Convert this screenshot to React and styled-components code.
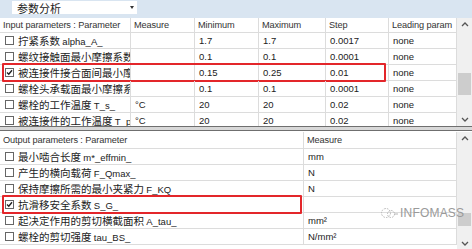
import React from "react";
import styled, { createGlobalStyle } from "styled-components";

const Global = createGlobalStyle`
  html, body { margin: 0; padding: 0; background: #ffffff; }
  body { font-family: "Liberation Sans", "Noto Sans CJK SC", sans-serif; font-size: 10px; color: #222; }
  * { box-sizing: border-box; }
`;

const Screen = styled.div`
  width: 472px;
  height: 249px;
  overflow: hidden;
  position: relative;
  display: flex;
  flex-direction: column;
  background: #fff;
`;

const TopBar = styled.div`
  height: 18px;
  background: #d9e5f1;
  padding: 1px 0 0 12px;
  flex: none;
`;

const Dropdown = styled.div`
  width: 125px;
  height: 13px;
  background: #fff;
  display: flex;
  align-items: center;
  justify-content: space-between;
  padding: 0 3px 0 5px;
  font-family: "Noto Sans CJK SC", sans-serif;
  font-size: 11px;
  color: #222;
`;

const Caret = styled.span`
  width: 0;
  height: 0;
  border-left: 2.5px solid transparent;
  border-right: 2.5px solid transparent;
  border-top: 3px solid #333;
`;

const Panel = styled.div`
  height: ${(p) => p.$h}px;
  display: flex;
  flex: none;
  overflow: hidden;
`;

const Table = styled.div`
  width: 457px;
  display: flex;
  flex-direction: column;
`;

const Row = styled.div`
  display: grid;
  grid-template-columns: ${(p) => p.$cols};
  height: ${(p) => p.$h}px;
  flex: none;
  position: relative;
  border-bottom: 1px solid #dcdcdc;
`;

const Cell = styled.div`
  border-right: 1px solid #dcdcdc;
  display: flex;
  align-items: center;
  gap: 4px;
  padding-left: ${(p) => (p.$head ? 3 : p.$first ? 5 : 4)}px;
  white-space: nowrap;
  overflow: hidden;
  font-family: ${(p) =>
    p.$cjk ? '"Noto Sans CJK SC", sans-serif' : '"Liberation Sans", "Noto Sans CJK SC", sans-serif'};
  font-size: ${(p) => (p.$cjk ? 10.5 : p.$head ? 9.2 : 9.5)}px;
  letter-spacing: ${(p) => (p.$head ? "-0.1px" : "0")};
  color: ${(p) => (p.$head ? "#333" : "#222")};
`;

const Latin = styled.span`
  font-family: "Liberation Sans", sans-serif;
  font-size: 9.5px;
`;

const Box = styled.span`
  width: 9px;
  height: 9px;
  border: 1px solid #666;
  background: #fff;
  flex: none;
  display: flex;
  align-items: center;
  justify-content: center;
`;

const Highlight = styled.div`
  position: absolute;
  left: 2px;
  top: -2px;
  width: ${(p) => p.$w}px;
  height: 19px;
  border: 2px solid #e3262a;
  border-radius: 1px;
  pointer-events: none;
`;

const Scroll = styled.div`
  width: 15px;
  background: #f0f0f0;
  display: flex;
  flex-direction: column;
  align-items: center;
  justify-content: space-between;
  position: relative;
  padding: 3px 0;
  flex: none;
`;

const Thumb = styled.div`
  position: absolute;
  left: 1px;
  width: 13px;
  top: ${(p) => p.$top}px;
  height: ${(p) => p.$h}px;
  background: #cdcdcd;
`;

const Splitter = styled.div`
  height: 5px;
  flex: none;
  border-top: 1px solid #6f6f6f;
  border-bottom: 1px solid #6f6f6f;
  background: #d8d8d8;
  margin-bottom: 1px;
`;

const Watermark = styled.div`
  position: absolute;
  left: 380px;
  top: 206px;
  display: flex;
  align-items: center;
  gap: 2px;
  font-family: "Liberation Sans", sans-serif;
  font-size: 12px;
  color: #9a9a9a;
  letter-spacing: 0.2px;
`;

const Chevron = ({ up }) => (
  <svg width="8" height="6" viewBox="0 0 8 6">
    <path d={up ? "M1 5 L4 2 L7 5" : "M1 1 L4 4 L7 1"} stroke="#555" strokeWidth="1.3" fill="none" />
  </svg>
);

const Check = ({ on }) => (
  <Box>
    {on && (
      <svg width="7" height="7" viewBox="0 0 7 7">
        <path d="M1 3.5 L2.8 5.3 L6 1.3" stroke="#222" strokeWidth="1.4" fill="none" />
      </svg>
    )}
  </Box>
);

const inCols = "131px 64px 64px 67px 63px 68px";
const outCols = "304px 153px";

const inputRows = [
  ["拧紧系数 ", "alpha_A_", "", "1.7", "1.7", "0.0017", "none"],
  ["螺纹接触面最小摩擦系数", "", "", "0.1", "0.1", "0.0001", "none"],
  ["被连接件接合面间最小摩擦系数", "", "", "0.15", "0.25", "0.01", "none", true],
  ["螺栓头承载面最小摩擦系数", "", "", "0.1", "0.1", "0.0001", "none"],
  ["螺栓的工作温度 ", "T_s_", "°C", "20", "20", "0.02", "none"],
  ["被连接件的工作温度 ", "T_p_", "°C", "20", "20", "0.02", "none"],
];

const outputRows = [
  ["最小啮合长度 ", "m*_effmin_", "mm"],
  ["产生的横向载荷 ", "F_Qmax_", "N"],
  ["保持摩擦所需的最小夹紧力 ", "F_KQ", "N"],
  ["抗滑移安全系数 ", "S_G_", "", true],
  ["起决定作用的剪切横截面积 ", "A_tau_", "mm²"],
  ["螺栓的剪切强度 ", "tau_BS_", "N/mm²"],
];

export default function App() {
  return (
    <Screen>
      <Global />
      <TopBar>
        <Dropdown>
          <span>参数分析</span>
          <Caret />
        </Dropdown>
      </TopBar>

      <Panel $h={108}>
        <Table>
          <Row $cols={inCols} $h={15}>
            {["Input parameters : Parameter", "Measure", "Minimum", "Maximum", "Step", "Leading param"].map((t, i) => (
              <Cell key={i} $head $first={i === 0}>{t}</Cell>
            ))}
          </Row>
          {inputRows.map((r, i) => (
            <Row key={i} $cols={inCols} $h={16}>
              <Cell $first $cjk>
                <Check on={r[7]} />
                <span>
                  {r[0]}
                  {r[1] && <Latin>{r[1]}</Latin>}
                </span>
              </Cell>
              <Cell>{r[2]}</Cell>
              <Cell>{r[3]}</Cell>
              <Cell>{r[4]}</Cell>
              <Cell>{r[5]}</Cell>
              <Cell>{r[6]}</Cell>
              {r[7] && <Highlight $w={384} />}
            </Row>
          ))}
        </Table>
        <Scroll>
          <Chevron up />
          <Thumb $top={55} $h={22} />
          <Chevron />
        </Scroll>
      </Panel>

      <Splitter />

      <Panel $h={118}>
        <Table>
          <Row $cols={outCols} $h={17}>
            <Cell $head $first>Output parameters : Parameter</Cell>
            <Cell $head>Measure</Cell>
          </Row>
          {outputRows.map((r, i) => (
            <Row key={i} $cols={outCols} $h={16}>
              <Cell $first $cjk>
                <Check on={r[3]} />
                <span>
                  {r[0]}
                  <Latin>{r[1]}</Latin>
                </span>
              </Cell>
              <Cell>{r[2]}</Cell>
              {r[3] && <Highlight $w={300} />}
            </Row>
          ))}
        </Table>
        <Scroll>
          <Chevron up />
          <Thumb $top={81} $h={13} />
          <Chevron />
        </Scroll>
      </Panel>

      <Watermark>
        <svg width="18" height="12" viewBox="0 0 18 12">
          <circle cx="6" cy="6" r="4.5" stroke="#b5b5b5" strokeWidth="1" strokeDasharray="1.5 1.2" fill="none" />
          <circle cx="11" cy="7" r="3.5" stroke="#b5b5b5" strokeWidth="1" strokeDasharray="1.5 1.2" fill="none" />
          <path d="M14 7 H18" stroke="#b5b5b5" strokeWidth="1" />
        </svg>
        <span>INFOMASS</span>
      </Watermark>
    </Screen>
  );
}
